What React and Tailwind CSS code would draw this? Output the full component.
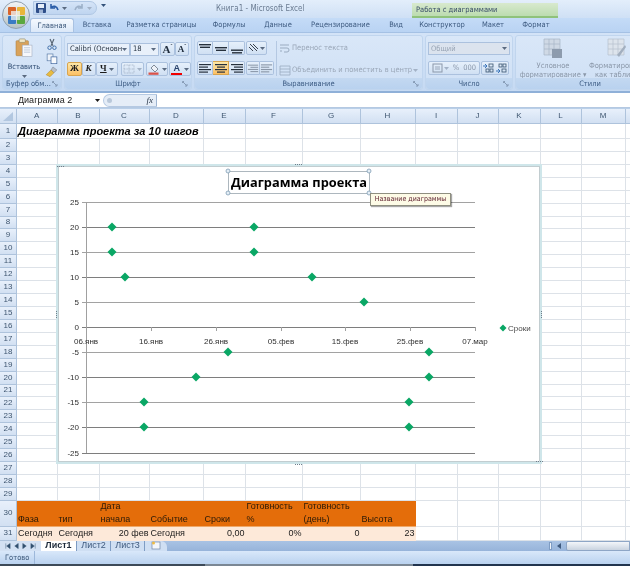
import React from "react";

const UI = "font-['DejaVu_Sans_Condensed','Noto_Sans',sans-serif]";
const tabs = [
  ["Главная", "w-[44px]", true],
  ["Вставка", "w-[46px]"],
  ["Разметка страницы", "w-[83px]"],
  ["Формулы", "w-[52px]"],
  ["Данные", "w-[46px]"],
  ["Рецензирование", "w-[79px]"],
  ["Вид", "w-[32px]"],
  ["Конструктор", "w-[60px]"],
  ["Макет", "w-[42px]"],
  ["Формат", "w-[44px]"],
];

function Lines({ variant = "center", dim = false }) {
  const c = dim ? "#8a97a8" : "#26303c";
  const rows = {
    left: [[1, 12], [1, 9], [1, 12], [1, 9]],
    center: [[1, 12], [3, 8], [1, 12], [3, 8]],
    right: [[1, 12], [4, 9], [1, 12], [4, 9]],
  }[variant];
  return (
    <svg width="14" height="11" viewBox="0 0 14 11">
      {rows.map(([x, w], i) => (
        <rect key={i} x={x} y={1 + i * 2.5} width={w} height="1.2" fill={c} />
      ))}
    </svg>
  );
}

function VAlign({ y }) {
  return (
    <svg width="14" height="11" viewBox="0 0 14 11">
      <rect x="1" y={y} width="12" height="1.4" fill="#26303c" />
      <rect x="2" y={y + 2.6} width="10" height="1.4" fill="#26303c" />
    </svg>
  );
}

function Caret({ c = "#5a6a80" }) {
  return (
    <svg width="5" height="3" viewBox="0 0 5 3" className="shrink-0">
      <path d="M0 0h5L2.5 3z" fill={c} />
    </svg>
  );
}

function Launcher() {
  return (
    <svg width="6" height="6" viewBox="0 0 6 6" className="shrink-0">
      <path d="M0.5 2V0.5H2M1 1l3.5 3.5M5 3v2H3" fill="none" stroke="#7a8ea8" strokeWidth="0.8" />
    </svg>
  );
}

function Group({ label, width, launcher, labelClass = "justify-center", children }) {
  return (
    <div className={`${width} shrink-0 h-full flex flex-col rounded-[3px] bg-gradient-to-b from-[#d9e7f8] to-[#cfe0f5] border border-[#c0d5ee]`}>
      <div className="flex-1 min-h-0">{children}</div>
      <div className={`h-[11px] relative flex items-center ${labelClass} bg-gradient-to-b from-[#c3d8f1] to-[#b9d2ef] text-[7.5px] leading-none text-[#3b5a82] rounded-b-[3px] whitespace-nowrap`}>
        {label}
        {launcher && (
          <span className="absolute right-[3px] top-[3px]">
            <Launcher />
          </span>
        )}
      </div>
    </div>
  );
}

function Combo({ width, dim, children }) {
  return (
    <div className={`${width} h-[13px] flex items-center justify-between px-[2px] border border-[#abc1de] text-[7.5px] leading-none ${dim ? "bg-[#dbe3ee] text-[#98a4b4]" : "bg-[#e8f0fa] text-[#1f2c3c]"}`}>
      <span className="whitespace-nowrap">{children}</span>
      <Caret />
    </div>
  );
}

function Btn({ className = "", children }) {
  return (
    <div className={`h-[14px] flex items-center justify-center border border-[#abc1de] rounded-[2px] bg-gradient-to-b from-[#e6f0fb] to-[#d0e0f3] ${className}`}>
      {children}
    </div>
  );
}

function Ribbon() {
  return (
    <div className="h-[60px] flex gap-[2px] px-[2px] pt-[2px] pb-[1px] bg-gradient-to-b from-[#d3e3f7] to-[#c6daf3] border-b-2 border-[#8fb0d8]">
      <Group label="Буфер обм..." width="w-[60px]" launcher labelClass="justify-start pl-[3px]">
        <div className="flex h-full">
          <div className="w-[42px] flex flex-col items-center pt-[2px]">
            <svg width="20" height="22" viewBox="0 0 20 22">
              <rect x="1" y="3" width="14" height="17" rx="1" fill="#d9a25a" stroke="#a97c3a" strokeWidth="0.6" />
              <rect x="4.5" y="1" width="7" height="4" rx="1" fill="#efe6c8" stroke="#8a7a50" strokeWidth="0.6" />
              <rect x="8" y="8" width="11" height="13" fill="#f6f8fc" stroke="#9aa6b8" strokeWidth="0.6" />
              <path d="M10 11h7M10 13.5h7M10 16h7" stroke="#9db0c8" strokeWidth="0.7" />
            </svg>
            <span className="text-[7.5px] leading-none mt-[5px] text-[#2c4a70]">Вставить</span>
            <span className="mt-[5px]"><Caret /></span>
          </div>
          <div className="flex flex-col items-center gap-[2px] pt-[2px]">
            <svg width="12" height="13" viewBox="0 0 12 13">
              <path d="M4 1l3 7M8 1L5 8" stroke="#5a6878" strokeWidth="1.2" fill="none" />
              <circle cx="3.5" cy="10" r="1.8" fill="none" stroke="#3f6ea8" strokeWidth="1" />
              <circle cx="8.5" cy="10" r="1.8" fill="none" stroke="#3f6ea8" strokeWidth="1" />
            </svg>
            <svg width="12" height="12" viewBox="0 0 12 12">
              <rect x="1" y="1" width="6" height="7" fill="#eef3fa" stroke="#5a7ca8" strokeWidth="0.7" />
              <rect x="5" y="4" width="6" height="7" fill="#f8fafd" stroke="#38609a" strokeWidth="0.7" />
            </svg>
            <svg width="13" height="12" viewBox="0 0 13 12">
              <path d="M8 1l4 3-3 3-3-3z" fill="#b8bec8" stroke="#6c7684" strokeWidth="0.5" />
              <path d="M6 4l3 3-4 4-4-2z" fill="#e8bb3f" stroke="#a9802a" strokeWidth="0.5" />
            </svg>
          </div>
        </div>
      </Group>

      <Group label="Шрифт" width="w-[128px]" launcher>
        <div className="flex flex-col gap-[6px] pt-[6px] pl-[2px]">
          <div className="flex items-center">
            <Combo width="w-[63px]">Calibri (Основн</Combo>
            <Combo width="w-[29px]">18</Combo>
            <Btn className="w-[15px] ml-[1px] items-start font-['Liberation_Serif',serif] font-bold text-[11px] leading-[12px] text-[#1f2c3c]">
              A<span className="text-[6px] leading-[6px]">ˆ</span>
            </Btn>
            <Btn className="w-[14px] items-start font-['Liberation_Serif',serif] font-bold text-[9px] leading-[13px] text-[#1f2c3c]">
              A<span className="text-[6px] leading-[6px]">ˇ</span>
            </Btn>
          </div>
          <div className="flex items-center">
            <Btn className="w-[15px] bg-gradient-to-b from-[#fde8a8] to-[#fbbf62] border-[#d8a550] font-['Liberation_Serif',serif] font-bold text-[9px] text-[#1b1b1b]">Ж</Btn>
            <Btn className="w-[14px] font-['Liberation_Serif',serif] font-bold italic text-[9px] text-[#1b1b1b]">К</Btn>
            <Btn className="w-[23px] gap-[2px] font-['Liberation_Serif',serif] font-bold underline text-[9px] text-[#1b1b1b]">Ч<Caret /></Btn>
            <Btn className="w-[23px] ml-[3px] gap-[2px]">
              <svg width="12" height="10" viewBox="0 0 12 10">
                <path d="M1 1h10v8H1zM6 1v8M1 5h10" fill="none" stroke="#a3b2c6" strokeWidth="0.8" strokeDasharray="1 0.6" />
              </svg>
              <Caret c="#a3b2c6" />
            </Btn>
            <Btn className="w-[23px] ml-[2px] gap-[2px]">
              <svg width="12" height="12" viewBox="0 0 12 12">
                <path d="M3 5l3-3 4 4-3 3z" fill="#eef2f8" stroke="#55606e" strokeWidth="0.7" />
                <rect x="0.5" y="9.5" width="10" height="2.3" fill="#d9534a" />
              </svg>
              <Caret />
            </Btn>
            <Btn className="w-[22px] ml-[1px] gap-[2px]">
              <span className="flex flex-col items-center leading-none font-['Liberation_Sans',sans-serif] font-bold text-[9px] text-[#27406a]">
                A
                <span className="w-[11px] h-[2px] bg-[#f00000]" />
              </span>
              <Caret />
            </Btn>
          </div>
        </div>
      </Group>

      <Group label="Выравнивание" width="w-[229px]" launcher>
        <div className="flex pt-[5px] pl-[2px] h-full">
          <div className="flex flex-col gap-[6px]">
            <div className="flex items-center">
              <Btn className="w-[16px] rounded-r-none"><VAlign y={1} /></Btn>
              <Btn className="w-[16px] rounded-none border-l-0"><VAlign y={4} /></Btn>
              <Btn className="w-[16px] rounded-l-none border-l-0"><VAlign y={6.5} /></Btn>
              <Btn className="w-[21px] ml-[1px] gap-[1px]">
                <svg width="11" height="10" viewBox="0 0 11 10">
                  <path d="M2 1l7 7M1 4l4 4M5 1l5 5" stroke="#39424e" strokeWidth="1" fill="none" />
                </svg>
                <Caret />
              </Btn>
            </div>
            <div className="flex items-center">
              <Btn className="w-[16px] rounded-r-none"><Lines variant="left" /></Btn>
              <Btn className="w-[16px] rounded-none border-l-0 bg-gradient-to-b from-[#fde8a8] to-[#fbbf62] border-[#d8a550]"><Lines variant="center" /></Btn>
              <Btn className="w-[16px] rounded-l-none border-l-0"><Lines variant="right" /></Btn>
              <Btn className="w-[14px] ml-[1px] rounded-r-none"><Lines variant="right" dim /></Btn>
              <Btn className="w-[14px] rounded-l-none border-l-0"><Lines variant="left" dim /></Btn>
            </div>
          </div>
          <div className="w-px h-[35px] mx-[2px] bg-[#b4c8e2]" />
          <div className="flex flex-col gap-[10px] pt-[1px] text-[7.5px] leading-none text-[#9aa7b8] whitespace-nowrap">
            <div className="flex items-center gap-[1px] h-[12px]">
              <svg width="12" height="11" viewBox="0 0 12 11">
                <path d="M1 2h9M1 5h7a2 2 0 010 4H5M1 8h2" fill="none" stroke="#9aabc0" strokeWidth="1" />
              </svg>
              Перенос текста
            </div>
            <div className="flex items-center gap-[1px] h-[12px]">
              <svg width="12" height="11" viewBox="0 0 12 11">
                <path d="M1 1h10v9H1zM1 4h10M1 7h10" fill="none" stroke="#9aabc0" strokeWidth="0.8" />
              </svg>
              Объединить и поместить в центр
              <Caret c="#a3b2c6" />
            </div>
          </div>
        </div>
      </Group>

      <Group label="Число" width="w-[88px]" launcher>
        <div className="flex flex-col gap-[6px] pt-[6px] pl-[2px]">
          <Combo width="w-[82px]" dim>Общий</Combo>
          <div className="flex items-center">
            <Btn className="w-[52px] gap-[4px] text-[7.5px] text-[#8b98aa]">
              <span className="flex items-center gap-[1px]">
                <svg width="11" height="10" viewBox="0 0 11 10">
                  <rect x="1" y="1" width="9" height="8" fill="none" stroke="#8b98aa" strokeWidth="1" />
                  <path d="M3 4h5M3 6h5" stroke="#8b98aa" strokeWidth="0.8" />
                </svg>
                <Caret c="#a3b2c6" />
              </span>
              <span>%</span>
              <span>000</span>
            </Btn>
            <Btn className="w-[28px] ml-[1px] gap-[2px]">
              <svg width="11" height="10" viewBox="0 0 11 10">
                <path d="M0 3h4M2 1l2 2-2 2" stroke="#2d6bb5" strokeWidth="0.9" fill="none" />
                <rect x="6" y="1" width="4" height="3" fill="none" stroke="#39546f" strokeWidth="0.8" />
                <rect x="3" y="6" width="3" height="3" fill="none" stroke="#39546f" strokeWidth="0.8" />
                <rect x="7" y="6" width="3" height="3" fill="none" stroke="#39546f" strokeWidth="0.8" />
              </svg>
              <svg width="11" height="10" viewBox="0 0 11 10">
                <path d="M0 8h4M2 6l2 2-2 2" stroke="#2d6bb5" strokeWidth="0.9" fill="none" />
                <rect x="3" y="1" width="3" height="3" fill="none" stroke="#39546f" strokeWidth="0.8" />
                <rect x="7" y="1" width="3" height="3" fill="none" stroke="#39546f" strokeWidth="0.8" />
                <rect x="6" y="6" width="4" height="3" fill="none" stroke="#39546f" strokeWidth="0.8" />
              </svg>
            </Btn>
          </div>
        </div>
      </Group>

      <Group label="Стили" width="w-[150px]">
        <div className="flex pt-[2px] text-[7.5px] leading-[9px] text-center text-[#8a97a8]">
          <div className="w-[74px] flex flex-col items-center">
            <svg width="20" height="21" viewBox="0 0 20 21">
              <path d="M1 1h16v16H1zM1 6h16M1 11h16M6 1v16M11 1v16" fill="#cfd9e5" stroke="#a6b4c5" strokeWidth="0.7" />
              <rect x="9" y="11" width="10" height="9" fill="#8d9bad" />
            </svg>
            <span className="mt-[2px]">Условное</span>
            <span className="whitespace-nowrap">форматирование ▾</span>
          </div>
          <div className="w-[50px] ml-[2px] flex flex-col items-center">
            <svg width="20" height="21" viewBox="0 0 20 21">
              <path d="M1 1h16v16H1zM1 6h16M1 11h16M6 1v16M11 1v16" fill="#dde4ec" stroke="#b4c0cf" strokeWidth="0.7" />
              <path d="M10 17l8-10 1 2-7 10z" fill="#a2afbf" />
            </svg>
            <span className="mt-[2px] whitespace-nowrap">Форматировать</span>
            <span className="whitespace-nowrap">как таблицу</span>
          </div>
        </div>
      </Group>
    </div>
  );
}

const columns = ["A", "B", "C", "D", "E", "F", "G", "H", "I", "J", "K", "L", "M", "N"];
const gridLine = "border-r border-b border-[#dde2e8]";
const headCell = "flex items-center justify-center bg-gradient-to-b from-[#e8f0fb] to-[#d2e0f2] border-r border-b border-[#aec3dc] text-[8px] leading-none text-[#3f5670]";
const hdr30 = ["Фаза", "тип", "Дата начала", "Событие", "Сроки", "Готовность %", "Готовность (день)", "Высота"];
const val31 = [["Сегодня", "text-left"], ["Сегодня", "text-left"], ["20 фев", "text-right"], ["Сегодня", "text-left"], ["0,00", "text-right"], ["0%", "text-right"], ["0", "text-right"], ["23", "text-right"]];

function Sheet() {
  const rows = Array.from({ length: 31 }, (_, i) => i + 1);
  return (
    <div className="grid grid-cols-[17px_40.5px_42px_50px_54px_42px_57px_58px_55px_42px_41px_42px_41px_44px_5px] grid-rows-[15px_15px_repeat(28,12.93px)_26px_14px] bg-white font-['Liberation_Sans',sans-serif]">
      <div className={headCell}>
        <svg width="12" height="11" viewBox="0 0 12 11"><path d="M11 1v9H1z" fill="#b2c7e0" /></svg>
      </div>
      {columns.map((c) => (
        <div key={c} className={headCell}>{c === "N" ? "" : c}</div>
      ))}
      {rows.map((r) => (
        <React.Fragment key={r}>
          <div className={headCell}>{r}</div>
          {r === 1 ? (
            <>
              <div className={`col-span-4 ${gridLine} flex items-end pl-[1px] pb-[1px] font-bold italic text-[11px] leading-none text-black whitespace-nowrap`}>
                Диаграмма проекта за 10 шагов
              </div>
              {columns.slice(4).map((c) => <div key={c} className={gridLine} />)}
            </>
          ) : r === 30 ? (
            columns.map((c, i) =>
              i < 8 ? (
                <div key={c} className="bg-[#e46d0a] flex items-end px-[1px] text-[9px] leading-[13px] text-[#2a1a08] border-b border-[#efa868]">
                  <span>{hdr30[i]}</span>
                </div>
              ) : (
                <div key={c} className={gridLine} />
              )
            )
          ) : r === 31 ? (
            columns.map((c, i) =>
              i < 8 ? (
                <div key={c} className={`bg-[#fde9d9] px-[1px] text-[9px] leading-[13px] text-[#1c1c1c] whitespace-nowrap ${val31[i][1]}`}>
                  {val31[i][0]}
                </div>
              ) : (
                <div key={c} className={gridLine} />
              )
            )
          ) : (
            columns.map((c) => <div key={c} className={gridLine} />)
          )}
        </React.Fragment>
      ))}
    </div>
  );
}

const yVals = [25, 20, 15, 10, 5, 0, -5, -10, -15, -20, -25];
const yPos = [201, 226, 251, 276, 301, 326, 351, 376, 401, 426, 452];
const xVals = [["06.янв", 86], ["16.янв", 151], ["26.янв", 216], ["05.фев", 281], ["15.фев", 345], ["25.фев", 410], ["07.мар", 475]];
const points = [[112, 226], [254, 226], [112, 251], [254, 251], [125, 276], [312, 276], [364, 301], [228, 351], [429, 351], [196, 376], [429, 376], [144, 401], [409, 401], [144, 426], [409, 426]];

function Handle({ x, y }) {
  return <circle cx={x} cy={y} r="2" fill="#e4eef6" stroke="#7f9db4" strokeWidth="0.8" />;
}

function Dots({ x, y, vertical }) {
  return [0, 1, 2, 3].map((i) => (
    <rect key={i} x={vertical ? x : x + i * 2} y={vertical ? y + i * 2 : y} width="1" height="1" fill="#6f7f8c" />
  ));
}

function Chart() {
  return (
    <div className="absolute left-[56px] top-[55px] w-[487px] h-[309px] font-['Liberation_Sans',sans-serif]">
      <svg width="487" height="309" viewBox="56 163 487 309" className="block">
        <rect x="57" y="164" width="484" height="298" fill="#ffffff" stroke="#cfe6ea" strokeWidth="2" />
        <rect x="58.5" y="165.5" width="481" height="295" fill="#ffffff" stroke="#a9b8bc" strokeWidth="0.7" />
        {yPos.map((y, i) => (
          <g key={y}>
            <line x1="82" x2="475" y1={y + 0.5} y2={y + 0.5} stroke={i % 2 === 1 || i === 10 ? "#7e7e7e" : "#a2a2a2"} strokeWidth="1" />
            <text x="79" y={y + 3} textAnchor="end" fontSize="8" fill="#2f2f2f">{yVals[i]}</text>
          </g>
        ))}
        <line x1="86.5" x2="86.5" y1="201" y2="452" stroke="#a0a0a0" strokeWidth="1" />
        {xVals.map(([t, x]) => (
          <g key={t}>
            <line x1={x + 0.5} x2={x + 0.5} y1="326" y2="330" stroke="#a0a0a0" strokeWidth="1" />
            <text x={x} y="343" textAnchor="middle" fontSize="8" fill="#2f2f2f">{t}</text>
          </g>
        ))}
        {points.map(([x, y]) => (
          <polygon key={`${x}-${y}`} points={`${x},${y - 4.5} ${x + 4.5},${y} ${x},${y + 4.5} ${x - 4.5},${y}`} fill="#0aa765" />
        ))}
        <polygon points="503,323.5 506.5,327 503,330.5 499.5,327" fill="#0aa765" />
        <text x="508" y="330" fontSize="8" fill="#4a4a4a">Сроки</text>
        <Dots x={295} y={163} />
        <Dots x={295} y={463} />
        <Dots x={56} y={310} vertical />
        <Dots x={541} y={310} vertical />
        <Dots x={57} y={165} />
        <Dots x={536} y={460} />
        <rect x="228.5" y="170.5" width="141" height="22" fill="#ffffff" stroke="#9aa6ae" strokeWidth="0.8" />
        <Handle x={228} y={170} />
        <Handle x={369} y={170} />
        <Handle x={228} y={192} />
        <Handle x={369} y={192} />
      </svg>
      <div className="absolute left-[172px] top-[7px] w-[142px] h-[23px] flex items-center justify-center text-[12.8px] leading-none font-bold text-black font-['Open_Sans','Liberation_Sans',sans-serif] whitespace-nowrap">
        Диаграмма проекта
      </div>
      <div className={`absolute left-[314px] top-[29px] w-[81px] h-[13px] flex items-center justify-center bg-[#fdfbe6] border border-[#8f8f80] shadow-[1px_1px_1px_rgba(0,0,0,0.35)] text-[7px] leading-none text-[#5a1a2a] whitespace-nowrap ${UI}`}>
        Название диаграммы
      </div>
    </div>
  );
}

function SheetTabs() {
  const tabCls = "h-[10px] flex items-center justify-center text-[9px] leading-none font-['Liberation_Sans',sans-serif]";
  return (
    <div className="h-[10px] flex items-stretch bg-gradient-to-b from-[#a9c3e4] to-[#97b4da]">
      <div className="w-[41px] flex items-center justify-around px-[3px] bg-[#d3e1f3]">
        {["M2 0v6M7 0L3 3l4 3z", "M6 0L2 3l4 3z", "M2 0l4 3-4 3z", "M1 0l4 3-4 3zM6 0v6"].map((d) => (
          <svg key={d} width="7" height="6" viewBox="0 0 8 6"><path d={d} fill="#33516f" stroke="#33516f" strokeWidth="0.5" /></svg>
        ))}
      </div>
      <div className={`${tabCls} w-[36px] bg-white font-bold text-[#1d2a3a] border-r border-[#7e9cc3]`}>Лист1</div>
      <div className={`${tabCls} w-[34px] bg-[#cfdff3] text-[#3f5a7e] border-r border-[#7e9cc3]`}>Лист2</div>
      <div className={`${tabCls} w-[34px] bg-[#cfdff3] text-[#3f5a7e] border-r border-[#7e9cc3]`}>Лист3</div>
      <div className="w-[22px] flex items-center justify-center bg-[#cfdff3] rounded-tr-[6px]">
        <svg width="11" height="9" viewBox="0 0 11 9">
          <rect x="1" y="1" width="8" height="7" fill="#f4f7fb" stroke="#6f86a6" strokeWidth="0.7" />
          <circle cx="2.5" cy="2" r="1.5" fill="#edbb45" />
        </svg>
      </div>
      <div className="flex-1" />
      <div className="w-[3px] my-[1px] bg-[#eef3fa] border border-[#7e9cc3]" />
      <div className="w-[14px] flex items-center justify-center">
        <svg width="4" height="6" viewBox="0 0 4 6"><path d="M4 0v6L0 3z" fill="#3f5a7e" /></svg>
      </div>
      <div className="w-[64px] bg-gradient-to-b from-[#f3f6fa] to-[#c9d3e0] border border-[#8ea6c6] rounded-l-[2px]" />
    </div>
  );
}

export default function App() {
  return (
    <div className={`w-[630px] h-[566px] overflow-hidden bg-white flex flex-col blur-[0.3px] ${UI}`}>
      <div className="h-[18px] flex items-start pt-[1px] bg-gradient-to-b from-[#e3eefb] to-[#cfe0f5] relative">
        <div className="absolute left-[2px] top-[1px] w-[28px] h-[28px] rounded-full bg-gradient-to-b from-[#f2f4f6] to-[#b6c2c4] border border-[#8f9fae] flex items-center justify-center z-10">
          <svg width="17" height="17" viewBox="0 0 17 17">
            <rect x="0" y="0" width="8" height="8" rx="1" fill="#d8642a" />
            <rect x="9" y="0" width="8" height="8" rx="1" fill="#e8b63a" />
            <rect x="0" y="9" width="8" height="8" rx="1" fill="#3a7bc4" />
            <rect x="9" y="9" width="8" height="8" rx="1" fill="#5aa83f" />
            <rect x="3" y="4" width="9" height="9" fill="#f2f4f6" opacity="0.75" />
          </svg>
        </div>
        <div className="ml-[33px] w-[64px] h-[14px] flex items-center gap-[3px] pl-[2px] rounded-r-full bg-gradient-to-b from-[#d5e4f7] to-[#bfd5f0] border border-[#b0c7e4]">
          <svg width="10" height="10" viewBox="0 0 10 10">
            <rect width="10" height="10" rx="1" fill="#2f4f8a" />
            <rect x="2" y="1" width="6" height="4" fill="#e6eef8" />
            <rect x="3" y="6.5" width="4" height="3.5" fill="#9fb4d4" />
          </svg>
          <svg width="10" height="10" viewBox="0 0 10 10">
            <path d="M2 1v4h4M2 5c2-3 6-2 7 2" fill="none" stroke="#2c5ea8" strokeWidth="1.6" />
          </svg>
          <Caret />
          <svg width="10" height="10" viewBox="0 0 10 10" className="ml-[4px]">
            <path d="M8 1v4H4M8 5C6 2 2 3 1 7" fill="none" stroke="#9db1c9" strokeWidth="1.6" />
          </svg>
          <Caret c="#a3b2c6" />
        </div>
        <div className="ml-[4px] mt-[3px]"><Caret c="#34527a" /></div>
        <div className="w-[118px] mt-[1px] ml-[110px] shrink-0 text-[8px] leading-[14px] text-[#6b7c92] whitespace-nowrap">
          Книга1 - Microsoft Excel
        </div>
        <div className="ml-[78px] mt-[2px] w-[146px] h-[15px] shrink-0 flex items-center pl-[4px] text-[7.5px] leading-none text-[#384d68] bg-gradient-to-b from-[#d8e9ce] to-[#bcdcb0] border-b-2 border-[#8fc27b]">
          Работа с диаграммами
        </div>
      </div>

      <div className="h-[15px] flex pl-[30px] bg-gradient-to-b from-[#c4dbf7] to-[#b9d3f3] border-b border-[#a5c1e4]">
        {tabs.map(([t, w, active]) => (
          <div
            key={t}
            className={`${w} shrink-0 flex items-center justify-center text-[7.5px] leading-none whitespace-nowrap ${active ? "bg-gradient-to-b from-[#f5f9fe] to-[#dbe8f8] border border-b-0 border-[#a9c2e2] rounded-t-[3px] text-[#3a5678]" : "text-[#3e5b80]"}`}
          >
            {t}
          </div>
        ))}
      </div>

      <Ribbon />

      <div className="h-[15px] flex items-center bg-white border-b border-[#b5c9e2]">
        <div className="w-[103px] flex items-center justify-between pl-[18px] pr-[3px] text-[9px] leading-none text-[#1b1b1b] font-['Liberation_Sans',sans-serif]">
          Диаграмма 2
          <Caret c="#1b1b1b" />
        </div>
        <div className="w-[54px] h-[13px] flex items-center justify-between pl-[3px] pr-[3px] rounded-l-full bg-[#e5edf7] border border-[#b5c9e2] border-r-[#9db4d2]">
          <span className="w-[5px] h-[5px] rounded-full bg-[#b9c8da]" />
          <span className="font-['Liberation_Serif',serif] italic text-[9px] leading-none text-[#2c3a4c]">fx</span>
        </div>
      </div>
      <div className="h-[1px] bg-[#b9cfe8]" />

      <div className="relative flex-1 min-h-0 flex flex-col">
        <Sheet />
        <Chart />
        <SheetTabs />
        <div className="h-[14px] flex items-center bg-gradient-to-b from-[#d9e8fa] to-[#bad2ef] text-[7.5px] leading-none text-[#3a5678]">
          <div className="w-[35px] pl-[5px] h-full flex items-center border-r border-[#9db8da]">Готово</div>
        </div>
        <div className="h-[2px] flex">
          <div className="w-[205px] bg-[#3d4a58]" />
          <div className="w-[208px] bg-[#7b8794]" />
          <div className="flex-1 bg-[#22344e]" />
        </div>
      </div>
    </div>
  );
}
